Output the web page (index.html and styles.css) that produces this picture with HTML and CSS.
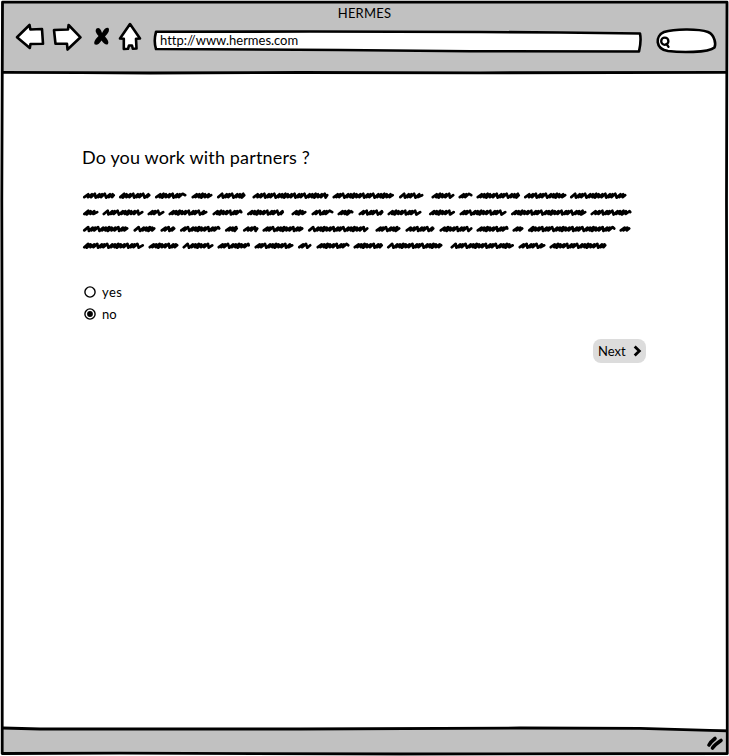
FILE: index.html
```
<!DOCTYPE html>
<html lang="en">
<head>
<meta charset="utf-8">
<title>HERMES</title>
<link rel="stylesheet" href="styles.css">
</head>
<body>
<div class="window">
  <header class="chrome">
    <div class="title"><span class="title-text">HERMES</span></div>
    <div class="toolbar">
      <svg class="nav" width="140" height="36" viewBox="14 20 140 36">
        <g class="outline">
          <path d="M17 37.2 L29.5 25 L30.4 29.5 L42 29 L43 43.8 L30.5 44 L29.8 48 Z"/>
          <path d="M54 30 L68 29.5 L68.6 25 L80.5 37.3 L67.5 49.5 L67 43.8 L55.5 43.8 Z"/>
          <path d="M120 38.500 L130 24 L140 38.500 L136 38.800 L136.500 48.500 L132.800 48.800 L132 45.500 L129 45.500 L128 48.800 L123.800 49 L123.800 38.800 Z"/>
        </g>
        <path class="cross" d="M96.500 28.500 Q100 26.500 102 33 Q105 27 108.500 28 Q110.500 31 105 36.500 Q109.500 41.500 108 44 Q105.500 46 101.500 40.500 Q98 46 94.500 44.300 Q93 41.500 98.500 36 Q94 31 96.500 28.500 Z"/>
      </svg>
      <div class="address">
        <svg class="shape" width="490" height="24" viewBox="153 29 490 24"><path class="outline" d="M156 31.800 L310 31.500 L480 32 L560 32.500 L640 33.500 Q641.500 41 639 51.500 L470 51.200 L340 50 L156 49 Q153.500 41 156 31.800 Z"/></svg>
        <span class="url">http://www.hermes.com</span>
      </div>
      <svg class="search" width="62" height="28" viewBox="656 27 62 28">
        <path class="outline" d="M668 51 C655 49 655 36 664 32 C674 29 698 28.500 708 32 C715 35 716 44 714.500 47.500 C708 53 680 52.500 668 51 Z"/>
        <circle class="lens" cx="664.800" cy="41.200" r="3.600"/>
        <path class="lens" d="M666.500 44 L668.500 46.800"/>
      </svg>
    </div>
  </header>

  <main class="page">
    <h1 class="question">Do you work with partners ?</h1>
    <svg class="scribble" id="scribble" width="552" height="64" viewBox="82 189 552 64" role="img"></svg>
    <div class="options">
      <div class="option"><svg class="radio" width="12" height="12" viewBox="0 0 12 12"><circle cx="6" cy="6" r="5.100"/></svg><span class="yes">yes</span></div>
      <div class="option"><svg class="radio" width="12" height="12" viewBox="0 0 12 12"><circle cx="6" cy="6" r="5.100"/><circle class="dot" cx="6" cy="6" r="2.900"/></svg><span>no</span></div>
    </div>
    <div class="actions">
      <div class="next"><span>Next</span><svg width="9" height="12" viewBox="0 0 9 12"><path class="chevron" d="M1.700 1.500 L6.300 6 L1.700 10.500"/></svg></div>
    </div>
  </main>

  <footer class="status"></footer>

  <svg class="frame" width="729" height="756" viewBox="0 0 729 756">
    <path class="statusfill" d="M3 728.500 L400 728.500 L727 731 L727 753 L3 753 Z"/>
    <path class="line" d="M2.500 2.200 L727 2.200 L726.500 200 L727 500 L727.300 753.500 L400 754 L120 753.200 L2.200 753.500 L2.300 500 L1.800 200 Z"/>
    <path class="line" d="M3 72.300 L80 72.600 L150 73 L300 72.500 L480 72.800 L727 72.400"/>
    <path class="line" d="M3 728 L40 729 L300 729 L520 728 L640 728.400 L727 730.800"/>
    <path class="grip" d="M709 745 Q710.500 742 715 738.500 M712.500 748 Q715 744.500 721 740.500"/>
  </svg>
</div>
<script src="script.js"></script>
</body>
</html>
```
FILE: styles.css
```
* { box-sizing: border-box; }
body { margin: 0; background: #fff; color: #000; font-family: Lato, "Open Sans", sans-serif; font-size: 13px; }
.window { position: relative; width: 729px; height: 756px; display: flex; flex-direction: column; padding: 2px 2px 3px 2px; overflow: hidden; }
.chrome { height: 71px; background: #c1c1c1; flex: none; }
.title { height: 18px; padding-top: 3px; line-height: 16px; text-align: center; }
.title-text { letter-spacing: 0.2px; }
.toolbar { display: flex; align-items: flex-start; padding-left: 12px; }
.nav { flex: none; }
.address { position: relative; flex: none; width: 490px; height: 24px; margin: 9px 13px 0 -1px; }
.shape { position: absolute; left: 0; top: 0; }
.url { position: relative; display: block; padding-left: 7px; line-height: 22px; letter-spacing: -0.02px; }
.search { flex: none; margin-top: 7px; }
.outline { fill: #fff; stroke: #000; stroke-width: 2.6; stroke-linejoin: round; }
.cross { fill: #000; }
.lens { fill: none; stroke: #000; stroke-width: 2.3; stroke-linecap: round; stroke-linejoin: round; }
.page { flex: 1; padding: 72px 81px 0 80px; }
.question { margin: 0; height: 44px; line-height: 24px; font-size: 18px; font-weight: 400; letter-spacing: 0.16px; white-space: nowrap; }
.scribble { display: block; fill: none; stroke: #000; stroke-width: 2.7; stroke-linecap: round; stroke-linejoin: round; }
.options { padding: 28px 0 0 2px; }
.option { display: flex; align-items: center; gap: 6px; height: 22px; }
.yes { letter-spacing: 0.4px; }
.radio { fill: #fff; stroke: #000; stroke-width: 1.4; }
.dot { fill: #000; stroke: none; }
.actions { display: flex; justify-content: flex-end; margin-top: 14px; }
.next { display: flex; align-items: center; gap: 7px; width: 53px; height: 24px; padding: 0 0 1px 5px; border-radius: 8px; background: #dcdcdc; }
.chevron { fill: none; stroke: #000; stroke-width: 2.8; }
.status { height: 24px; background: #c1c1c1; flex: none; }
.frame { position: absolute; left: 0; top: 0; pointer-events: none; }
.line { fill: none; stroke: #000; stroke-width: 2.8; stroke-linejoin: round; }
.statusfill { fill: #c1c1c1; }
.grip { fill: none; stroke: #000; stroke-width: 3.6; stroke-linecap: round; }
```
FILE: script.js
```
// Each row: baseline centre, then start/end pairs of scribbled words.
const rows = [
  [195.7, 83,115, 119,150.5, 155,186.5, 191.5,212.5, 217,245.5, 252.5,328.5, 332.5,394, 399,423.5, 431.5,454.5, 458.5,472.5, 476.5,520, 524,566.5, 570,626.5],
  [212.6, 83,98.5, 102.5,143.5, 147.5,164.5, 168.5,207.5, 212.5,242.5, 247,284, 291.5,306.5, 311.5,333.5, 337.5,353.5, 358.5,383.5, 387.5,421.5, 429,455, 459.5,506.5, 511,586.5, 590.5,631.5],
  [229, 83,128.5, 133.5,155.5, 160.5,175.5, 180,220.5, 225,238, 243,258.5, 262.5,303.5, 308,368.5, 375.5,400.5, 405.5,434.5, 439.5,472.5, 476.5,508.5, 512.5,523.5, 528,615.5, 619.5,630.5],
  [245.8, 83,144, 148.5,178.5, 182.5,213.5, 217.5,250, 254.5,293.5, 298,311.5, 316.5,349.5, 353.5,383, 387,442.5, 450.5,514, 518.5,545.5, 549.5,606.5]
];
const steps = [3.7, 3, 4.6, 2.5, 2.8, 5.2, 2.6, 3.4, 2.4];
let k = 0;
let d = "";
for (const [y, ...ends] of rows) {
  for (let i = 0; i < ends.length; i += 2) {
    let x = ends[i] + 1.3;
    const end = ends[i + 1] - 1.3;
    d += `M${x} ${y + 1.4}`;
    while (x + 4.2 <= end) {
      const s = steps[k++ % steps.length];
      const lift = k % 3 ? 1.4 : 1.9;
      d += `L${x + 3.9} ${y - lift}`;
      x += s;
      if (x + 1.5 < end) d += `L${x} ${y + lift}`;
    }
    d += `L${end} ${y - 0.5}`;
  }
}
const path = document.createElementNS("http://www.w3.org/2000/svg", "path");
path.setAttribute("d", d);
document.getElementById("scribble").appendChild(path);
```
